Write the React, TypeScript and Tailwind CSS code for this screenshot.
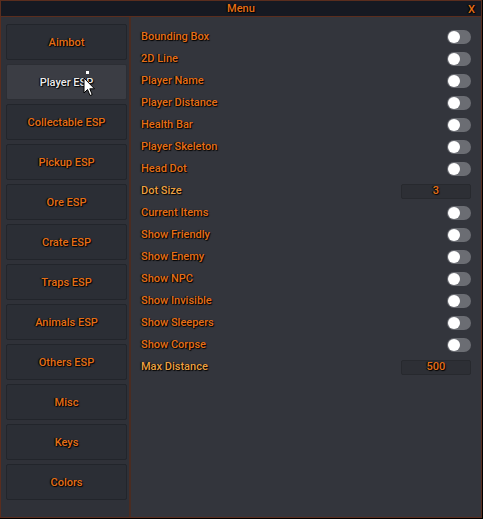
import { useState } from "react";

const tabs = [
 "Aimbot",
 "Player ESP",
 "Collectable ESP",
 "Pickup ESP",
 "Ore ESP",
 "Crate ESP",
 "Traps ESP",
 "Animals ESP",
 "Others ESP",
 "Misc",
 "Keys",
 "Colors",
];

type Row = { label: string; kind: "toggle" | "input"; value?: string };

const rows: Row[] = [
 { label: "Bounding Box", kind: "toggle" },
 { label: "2D Line", kind: "toggle" },
 { label: "Player Name", kind: "toggle" },
 { label: "Player Distance", kind: "toggle" },
 { label: "Health Bar", kind: "toggle" },
 { label: "Player Skeleton", kind: "toggle" },
 { label: "Head Dot", kind: "toggle" },
 { label: "Dot Size", kind: "input", value: "3" },
 { label: "Current Items", kind: "toggle" },
 { label: "Show Friendly", kind: "toggle" },
 { label: "Show Enemy", kind: "toggle" },
 { label: "Show NPC", kind: "toggle" },
 { label: "Show Invisible", kind: "toggle" },
 { label: "Show Sleepers", kind: "toggle" },
 { label: "Show Corpse", kind: "toggle" },
 { label: "Max Distance", kind: "input", value: "500" },
];

const shadow = "[text-shadow:1px_1px_1px_#000,-1px_0_1px_#000]";

function Toggle() {
 return (
  <div className="w-[24px] h-[14px] rounded-full bg-[#6b6d73] flex items-center px-[1px]">
   <div className="w-[12px] h-[12px] rounded-full bg-white" />
  </div>
 );
}

function Cursor() {
 return (
  <div className="absolute left-[81px] top-[70px] pointer-events-none">
   <div className="absolute left-[4px] top-0 w-[3px] h-[3px] bg-white" />
   <svg width="14" height="22" viewBox="0 0 14 22" className="absolute left-[1px] top-[6px]">
    <path d="M1 1 L1 16 L4.5 12.5 L7 18.5 L9.2 17.6 L6.8 11.8 L11.5 11.8 Z" fill="#fff" stroke="#000" strokeWidth="1" />
   </svg>
  </div>
 );
}

export default function App() {
 const [active, setActive] = useState(1);

 return (
  <div className="w-[483px] h-[519px] bg-black font-['Roboto','Liberation_Sans',sans-serif] font-medium text-[11px]">
   <div className="relative w-[482px] h-[518px] border border-[#5a2d1e] bg-[#33353c] flex flex-col">
    <div className="relative h-[16px] bg-[#161922] border-b border-[#5a2d1e] flex items-center justify-center pt-[1px]">
     <span className={`text-[#e56f15] ${shadow}`}>Menu</span>
     <span className={`absolute right-[6px] top-[1px] text-[#e56f15] ${shadow}`}>X</span>
    </div>
    <div className="flex flex-1 min-h-0">
     <div className="w-[130px] bg-[#2f3138] border-r-2 border-[#4a2c22] pt-[7px] pl-[5px] pr-[3px] flex flex-col gap-[4px]">
      {tabs.map((t, i) => (
       <button
        key={t}
        onClick={() => setActive(i)}
        className={`h-[36px] w-[121px] rounded-[2px] border flex items-center justify-center pt-[2px] ${
         i === active
          ? `bg-[#3b3d44] border-[#2c2e34] text-[#ececec] ${shadow}`
          : `bg-[#2b2e35] border-[#22252b] text-[#e56f15] ${shadow}`
        }`}
       >
        {t}
       </button>
      ))}
     </div>
     <div className="flex-1 pt-[9px] pl-[10px] pr-[10px] flex flex-col">
      {rows.map((r) => (
       <div key={r.label} className="h-[22px] flex items-center justify-between">
        <span className={`${r.kind === "input" ? "text-[#eba040]" : "text-[#e56f15]"} ${shadow}`}>
         {r.label}
        </span>
        {r.kind === "toggle" ? (
         <Toggle />
        ) : (
         <div className="w-[70px] h-[15px] rounded-[2px] bg-[#2d2f35] border border-[#27292e] flex items-center justify-center">
          <span className={`text-[#e56f15] ${shadow}`}>{r.value}</span>
         </div>
        )}
       </div>
      ))}
     </div>
    </div>
    <Cursor />
   </div>
  </div>
 );
}
